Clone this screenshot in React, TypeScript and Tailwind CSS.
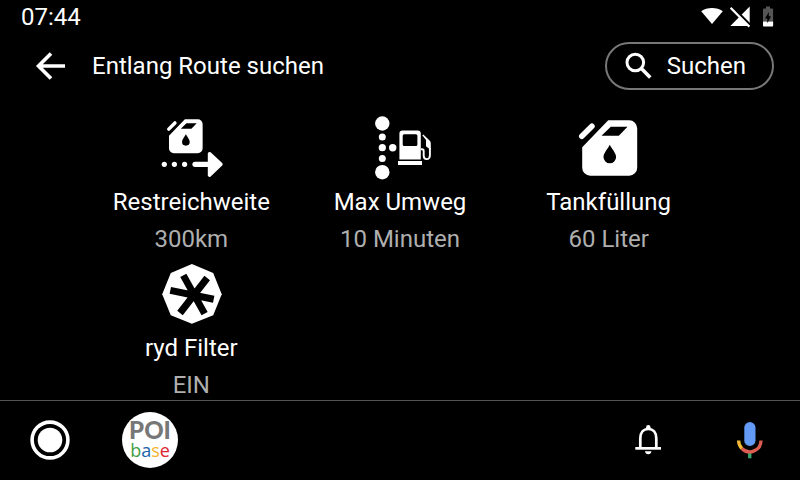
import type { ReactNode } from "react";

type Tile = {
  id: string;
  label: string;
  value: string;
  icon: ReactNode;
};

function Canister() {
  return (
    <>
      <path
        fill="#fff"
        fillRule="evenodd"
        d="M31.2 4.3H52.2a8 8 0 0 1 8 8V51.7a8 8 0 0 1-8 8H13.2a8 8 0 0 1-8-8V31.3ZM33.8 10.7 24.5 19.7H41.8L50.5 10.7ZM32.8 28.7C31 32.5 26.5 37 26.5 41a6.3 6.3 0 0 0 12.6 0C39.1 37 34.6 32.5 32.8 28.7Z"
      />
      <path d="M4.8 20.3 14.9 10.2" stroke="#fff" strokeWidth="5.6" strokeLinecap="round" />
    </>
  );
}

function RangeIcon() {
  return (
    <svg viewBox="0 0 64 64" className="size-16 overflow-visible" fill="#fff">
      <g transform="translate(6.8 .7) scale(.612)">
        <Canister />
      </g>
      <circle cx="5.3" cy="48.3" r="2.6" />
      <circle cx="15.4" cy="48.3" r="2.6" />
      <circle cx="25.6" cy="48.3" r="2.6" />
      <path d="M36 48.3H51" stroke="#fff" strokeWidth="5.2" strokeLinecap="round" />
      <path d="M50.5 37.6 62 48.3 50.5 59.2Z" stroke="#fff" strokeWidth="3.4" strokeLinejoin="round" />
    </svg>
  );
}

function DetourIcon() {
  return (
    <svg viewBox="0 0 64 64" className="size-16" fill="#fff">
      <circle cx="14.3" cy="7.5" r="7.2" />
      <circle cx="14.3" cy="21" r="3.5" />
      <circle cx="14.3" cy="31.7" r="3.6" />
      <circle cx="24.7" cy="31.8" r="3.7" />
      <circle cx="14.3" cy="42.4" r="3.5" />
      <circle cx="14.3" cy="56.2" r="7.2" />
      <path
        fillRule="evenodd"
        d="M34.6 14.4H49.6a3.2 3.2 0 0 1 3.2 3.2V43.6H31.4V17.6a3.2 3.2 0 0 1 3.2-3.2ZM36.2 18.2a1.5 1.5 0 0 0-1.5 1.5V28.5a1.5 1.5 0 0 0 1.5 1.5H47.9a1.5 1.5 0 0 0 1.5-1.5V19.7a1.5 1.5 0 0 0-1.5-1.5Z"
      />
      <path d="M30 45H54V49H30Z" />
      <path d="M54.3 19.2 55.3 18.5 61.6 24.6Q62.8 25.8 62.8 27.5V34L58 30.2V24Z" />
      <path
        d="M52.8 33.2H54q1.7 0 1.7 1.8V39.8q0 3.3 3 3.3t3.2-3.6V32"
        fill="none"
        stroke="#fff"
        strokeWidth="1.9"
      />
    </svg>
  );
}

function TankIcon() {
  return (
    <svg viewBox="0 0 64 64" className="size-16">
      <Canister />
    </svg>
  );
}

function RydIcon() {
  return (
    <svg viewBox="0 0 64 64" className="size-16">
      <path d="M32.9 2 54.2 11 62.7 32.2 54.2 53.2 32.9 61.8 11.8 53.2 3.2 32.2 11.8 11Z" fill="#fff" />
      <path
        d="M24.3 13.4 45.6 51.6M48.2 16 21 51M11.3 28.4 54.7 37.2"
        stroke="#000"
        strokeWidth="7"
      />
    </svg>
  );
}

function StatusIcons() {
  return (
    <div className="flex items-center">
      <svg viewBox="0 0 22 22" className="mr-[7px] size-[22px]" fill="#fff">
        <path d="M11 18 .2 5.2Q4.8 2 11 2T21.8 5.2Z" />
      </svg>
      <svg viewBox="0 0 20 22" className="mr-3 h-[22px] w-5">
        <path d="M19.7 .6V20H.3Z" fill="#fff" />
        <path d="M2.2 .8 21 19.600" stroke="#000" strokeWidth="2.400" />
        <path d="M.6 1.900 19.400 20.700" stroke="#fff" strokeWidth="2.200" />
      </svg>
      <svg viewBox="0 0 12 22" className="h-[22px] w-3">
        <path d="M4 .5H8V2.500H10.200a.9.9 0 0 1 .9.9V15.500H1V3.400A.9.9 0 0 1 1.900 2.500H4Z" fill="#555" />
        <path d="M1 15.500H11.100V19.700a.8.8 0 0 1-.8.8H1.800a.8.8 0 0 1-.8-.8Z" fill="#fff" />
        <path d="M6.800 6V10.300H9L5.300 17.300V12.500H3Z" fill="#000" />
      </svg>
    </div>
  );
}

const tiles: Tile[] = [
  { id: "range", label: "Restreichweite", value: "300km", icon: <RangeIcon /> },
  { id: "detour", label: "Max Umweg", value: "10 Minuten", icon: <DetourIcon /> },
  { id: "tank", label: "Tankfüllung", value: "60 Liter", icon: <TankIcon /> },
  { id: "ryd", label: "ryd Filter", value: "EIN", icon: <RydIcon /> },
];

export default function App() {
  return (
    <div className="flex min-h-screen flex-col bg-black font-['Roboto',sans-serif] text-2xl text-white">
      <div className="flex h-[34px] items-center justify-between pr-[26px] pl-[21px]">
        <time>07:44</time>
        <StatusIcons />
      </div>

      <header className="flex items-center pt-2 pr-[26px] pl-[34px]">
        <button aria-label="Zurück" className="mr-[26px]">
          <svg viewBox="0 0 32 32" className="size-8" fill="none" stroke="#fff" strokeWidth="3.6">
            <path d="M31 16H4M17 3.500 4.500 16 17 28.500" />
          </svg>
        </button>
        <h1 className="flex-1">Entlang Route suchen</h1>
        <button className="flex h-12 items-center gap-[14px] rounded-full border-2 border-[#777] pr-[26px] pl-[18px]">
          <svg viewBox="0 0 28 28" className="size-7" fill="none" stroke="#fff" strokeWidth="3">
            <circle cx="10.300" cy="10.500" r="8.300" />
            <path d="M16.100 16.300 25.300 25.500" strokeWidth="3.600" />
          </svg>
          Suchen
        </button>
      </header>

      <main className="grid flex-1 grid-cols-3 content-start gap-y-2 px-[87px] pt-[26px]">
        {tiles.map((t) => (
          <button key={t.id} className="flex flex-col items-center whitespace-nowrap">
            {t.icon}
            <span className="leading-[44px]">{t.label}</span>
            <span className="leading-[30px] text-[#afafaf]">{t.value}</span>
          </button>
        ))}
      </main>

      <nav className="flex h-20 items-center justify-between border-t border-[#555] pr-[34px] pb-[2px] pl-[30px]">
        <div className="flex items-center gap-[52px]">
          <button aria-label="Home">
            <svg viewBox="0 0 40 40" className="size-10">
              <circle cx="20" cy="20" r="17.900" fill="none" stroke="#fff" strokeWidth="3.600" />
              <circle cx="20" cy="20" r="12.300" fill="#fff" />
            </svg>
          </button>
          <button
            aria-label="POIbase"
            className="flex size-14 flex-col items-center justify-center rounded-full bg-white"
          >
            <span className="font-['Lato',sans-serif] text-2xl leading-5 font-black text-[#777]">POI</span>
            <span className="font-['Open_Sans',sans-serif] text-lg leading-5 font-medium">
              <span className="text-[#3fa044]">b</span>
              <span className="text-[#1d62a8]">a</span>
              <span className="text-[#f5b32f]">s</span>
              <span className="text-[#dc2430]">e</span>
            </span>
          </button>
        </div>
        <div className="flex items-center gap-[70px]">
          <button aria-label="Benachrichtigungen">
            <svg viewBox="0 0 32 32" className="size-8" fill="#fff">
              <path
                d="M8.300 24V14.500C8.300 8.500 11.500 5 16.300 5S24.300 8.500 24.300 14.500V24"
                fill="none"
                stroke="#fff"
                strokeWidth="2.700"
              />
              <circle cx="16.300" cy="3.300" r="2.200" />
              <path d="M3.300 23H29V25.700H3.300Z" />
              <path d="M13 27.300H19.500Q19 30.300 16.200 30.300T13 27.300Z" />
            </svg>
          </button>
          <button aria-label="Spracheingabe">
            <svg viewBox="0 0 32 40" className="h-10 w-8" fill="none">
              <path d="M14.100 32H17.400V38.300H14.100Z" fill="#34a56f" />
              <rect x="10.300" y="2" width="11.200" height="24" rx="5.600" fill="#629af5" />
              <path d="M4.600 20.500A11.200 11.200 0 0 0 7.900 28.500" stroke="#f3b932" strokeWidth="3.300" />
              <path d="M7.900 28.500A11.200 11.200 0 0 0 27 20.500" stroke="#dc5c50" strokeWidth="3.300" />
            </svg>
          </button>
        </div>
      </nav>
    </div>
  );
}
